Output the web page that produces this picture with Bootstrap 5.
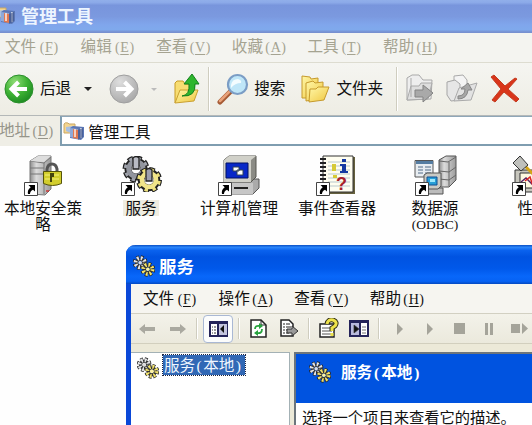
<!DOCTYPE html>
<html lang="zh-CN">
<head>
<meta charset="utf-8">
<meta name="viewport" content="width=device-width, initial-scale=1">
<title>管理工具</title>
<link href="https://cdn.jsdelivr.net/npm/bootstrap@5.3.0/dist/css/bootstrap.min.css" rel="stylesheet">
<style>
body{font:15.6px/18px "Noto Sans CJK SC",sans-serif;color:#111;background:#fefefe;height:425px}
svg{display:block;flex:none}
.desk{width:532px;height:425px}
.ttl{height:33px;padding:0 0 4px;background:linear-gradient(#91afea 0,#8ba9e8 8%,#7895dc 16%,#7b99df 50%,#80a6ec 75%,#7fa9ec 90%,#7790d0 97%);color:#edf5ff;font-weight:700;font-size:18px}
.ttl .cap{margin-left:5px}
.menus{height:29px;background:#f4f4f0;color:#a5a391;padding:0 0 2px 5px}
.menus>span{width:75.6px;flex:none;white-space:nowrap}
.ak{display:inline-block;font-family:"Liberation Serif",serif;font-size:14px;width:24px;margin-left:1px;text-align:center;letter-spacing:.6px}
.ak u{text-underline-offset:2px;letter-spacing:0;margin-right:.6px}
.tools{height:54px;background:linear-gradient(#f5f5f1,#eeede4);border-top:1px solid #dddcd0;border-bottom:1px solid #b4b8b8}
.rule{width:1px;flex:none;background:#cfcdbf;box-shadow:1px 0 #fff}
.caret{width:0;height:0;border:4px solid transparent;border-top-color:#222;border-bottom:0}
.caret.dim{border-width:3px 3px 0;border-top-color:#bbb}
.addr{height:30px;background:#efeee6;color:#96958a}
.addr .lbl{margin-left:-1px;padding-bottom:2px}
.addr .field{margin-left:5px;background:#fff;border:2px solid #7f9db0;border-top:1px solid #8fa7b8;border-right:0;color:#111;padding-left:1px}
.grid{margin-left:-6px;padding-top:9px}
.item{width:98px;flex:none;line-height:15.500px}
.item .lb{margin-top:4px;padding:0 2px;width:84px;text-align:center}
.item .lb.sel{width:auto;background:#efede1}
.odbc{font-family:"Liberation Serif",serif;font-size:13.500px;position:relative;top:-1px}
.win{position:absolute;left:126px;top:245px;width:440px;height:200px;border-left:5px solid #0a48d8;border-radius:9px 0 0 0;background:#ece9d8}
.wttl{height:39px;margin-left:-5px;padding:3px 0 0 7px;border-radius:9px 0 0 0;background:linear-gradient(#0a4fc4 0,#2b86fb 6%,#0a62ee 14%,#0053e1 30%,#0058ea 60%,#0867fa 80%,#0662f4 93%,#0448c0);color:#fff;font-weight:700;font-size:17.5px}
.wmenu{height:29px;color:#111;padding:0 0 0 12px;background:#f6f5f0}
.wtools{height:31px;background:linear-gradient(#f3f2ea,#ebe9dc);border-top:1px solid #d2d0c2;border-bottom:1px solid #d2cfbe}
.cell{flex:none;display:flex;justify-content:center}
.act{width:30px;height:28px;border:1px solid #a9b8d4;border-radius:4px;background:#fbfcfc;align-items:center}
.panes{padding-top:8px;height:101px}
.tree{width:159px;flex:none;background:#fff;border:1px solid #a3b1b5;border-left:0;padding:0 0 0 6px}
.pick{background:#3168b5;color:#eef6ff;outline:1px dotted #1c2440;height:20px;width:82px;padding-left:1px;line-height:18px;white-space:nowrap;margin:2px 0 0 4px}
.pick i,.banner i{font-style:normal;font-family:"Liberation Serif",serif;display:inline-block;text-align:center}
.pick i{width:8px}
.detail{margin-left:4px;width:300px;background:#fff;border:2px solid #6c757c}
.banner{height:49px;background:#0053e0;color:#fff;font-weight:700;font-size:15.6px;padding:0 0 14px 13px}
.banner i{width:9px}
.hint{padding:4px 0 0 6px;font-size:15.300px;letter-spacing:-.02px}
</style>
<script src="https://cdn.jsdelivr.net/npm/bootstrap@5.3.0/dist/js/bootstrap.bundle.min.js"></script>
</head>
<body>
<svg width="0" height="0" class="position-absolute">
<defs>
<symbol id="gears" viewBox="0 0 40 36">
<g fill="none"><circle cx="14" cy="13" r="10.5" stroke="#222" stroke-width="6" stroke-dasharray="5 3.25"/><circle cx="14" cy="13" r="8" stroke="#222" stroke-width="7"/><circle cx="14" cy="13" r="10.2" stroke="#a0a3ac" stroke-width="4" stroke-dasharray="3.2 4.81" stroke-dashoffset="-.9"/><circle cx="14" cy="13" r="7.3" stroke="#92959e" stroke-width="5"/></g>
<path d="M11 2q3-3 6 0v11h-6z" fill="#b9bbc4" stroke="#222" stroke-width="1.3"/>
<g fill="none"><circle cx="27" cy="24" r="10" stroke="#222" stroke-width="6" stroke-dasharray="5 2.85"/><circle cx="27" cy="24" r="8" stroke="#222" stroke-width="6.5"/><circle cx="27" cy="24" r="9.8" stroke="#eee17c" stroke-width="4" stroke-dasharray="3.3 4.4" stroke-dashoffset="-.9"/><circle cx="27" cy="24" r="7.1" stroke="#f1e58a" stroke-width="4.5"/></g>
<path d="M24 14q3-3 6 0v11h-6z" fill="#9d9fae" stroke="#222" stroke-width="1.3"/>
</symbol>
<symbol id="minigears" viewBox="0 0 20 20">
<g fill="none"><circle cx="6.5" cy="7" r="4.6" stroke="#222" stroke-width="4.2" stroke-dasharray="2.2 1.41"/><circle cx="6.5" cy="7" r="3.2" stroke="#333" stroke-width="3"/><circle cx="6.5" cy="7" r="4.2" stroke="#e4e5e8" stroke-width="3.6" stroke-dasharray="1.6 1.7"/>
<circle cx="13.5" cy="13" r="4.6" stroke="#222" stroke-width="4.2" stroke-dasharray="2.2 1.41"/><circle cx="13.5" cy="13" r="3.2" stroke="#333" stroke-width="3"/><circle cx="13.5" cy="13" r="4.2" stroke="#f4e46a" stroke-width="3.6" stroke-dasharray="1.6 1.7"/></g>
<circle cx="6.5" cy="7" r="1.6" fill="#ddd"/><circle cx="13.5" cy="13" r="1.6" fill="#fff5a0"/>
</symbol>
<symbol id="cut" viewBox="0 0 14 14"><path d="M.5.5h13v13H.5z" fill="#fff" stroke="#444"/><path d="M4.5 3H11v6.5L9 7.7Q6 9 6 12H4q-1-4 2.7-6.800z" fill="#000"/></symbol>
<symbol id="admin" viewBox="0 0 22 20">
<path d="M1 3q1-2 4-1l1 1h6v9H1z" fill="#f3d590" stroke="#c9a765"/><path d="M3 6l7-1v8l-7-3z" fill="#a9c0e0"/><path d="M7 7l3-2 11 1v10l-3 3-11-2z" fill="#5b76b4"/><path d="M7 7l8 1v10l-8-2z" fill="#8ea9d8"/><path d="M10 8l5 1v9l-5-1z" fill="#e07850"/><path d="M12 8v8M18 7v10" stroke="#fff" stroke-width="1.300"/><path d="M15 9l5-2v9l-5 3z" fill="#405487" opacity=".6"/>
</symbol>
<radialGradient id="gr" cx=".35" cy=".25" r=".8"><stop offset="0" stop-color="#8fdc76"/><stop offset=".55" stop-color="#3eb234"/><stop offset="1" stop-color="#1c8a22"/></radialGradient>
<radialGradient id="gy" cx=".35" cy=".25" r=".8"><stop offset="0" stop-color="#dedede"/><stop offset="1" stop-color="#a8a8a8"/></radialGradient>
<linearGradient id="fd" x2="1" y2="1"><stop offset="0" stop-color="#fff7a8"/><stop offset="1" stop-color="#efc63f"/></linearGradient>
<linearGradient id="bx"><stop offset="0" stop-color="#8d8d8d"/><stop offset=".3" stop-color="#dcdcdc"/><stop offset="1" stop-color="#9b9b9b"/></linearGradient>
</defs>
</svg>
<div class="desk position-relative overflow-hidden">
<header class="ttl d-flex align-items-center">
<svg width="22" height="20" style="margin-left:-6px"><use href="#admin"/></svg><span class="cap">管理工具</span>
</header>
<nav class="menus d-flex align-items-center">
<span>文件<span class="ak">(<u>F</u>)</span></span><span>编辑<span class="ak">(<u>E</u>)</span></span><span>查看<span class="ak">(<u>V</u>)</span></span><span>收藏<span class="ak">(<u>A</u>)</span></span><span>工具<span class="ak">(<u>T</u>)</span></span><span>帮助<span class="ak">(<u>H</u>)</span></span>
</nav>
<div class="tools d-flex align-items-center ps-1">
<svg width="30" height="30"><circle cx="15" cy="15" r="14" fill="url(#gr)" stroke="#2b8f2c"/><path d="M23 15H8M14.500 8L7.500 15l7 7" fill="none" stroke="#fff" stroke-width="4"/></svg>
<span class="text-nowrap pb-1" style="margin:0 13px 0 6px">后退</span>
<i class="caret" style="margin-right:17px"></i>
<svg width="30" height="30"><circle cx="15" cy="15" r="14" fill="url(#gy)" stroke="#9f9f9f"/><path d="M7 15h15M15.500 8l7 7-7 7" fill="none" stroke="#fff" stroke-width="4"/></svg>
<i class="caret dim" style="margin:0 17px 0 12px"></i>
<svg width="26" height="32" viewBox="0 0 26 32"><path d="M1 30V10l2-2h6l2 3h8v6" fill="#f7dd72" stroke="#c79b24"/><path d="M1 30l5-13h18l-4 11z" fill="url(#fd)" stroke="#caa030"/><path d="M8 23q8-1 7-12h-5l8-10 7 10h-4q1 13-13 12z" fill="#2fb62d" stroke="#14801d"/></svg>
<i class="rule align-self-stretch my-1 ms-2"></i>
<svg class="ms-2" width="32" height="32" viewBox="0 0 32 32"><path d="M13 19L3 29" stroke="#a65b35" stroke-width="5" stroke-linecap="round"/><path d="M12 19L3 28" stroke="#e8a27a" stroke-width="2.500" stroke-linecap="round"/><circle cx="20.500" cy="11.500" r="9.500" fill="#bfe6f8" stroke="#7b9dc5" stroke-width="2.200"/><path d="M14 12q1-6 7-6 4 1 3 4-6 0-10 5z" fill="#f3fcff"/></svg>
<span class="text-nowrap pb-1" style="margin-left:5px">搜索</span>
<svg class="ms-3" width="29" height="30" viewBox="0 0 29 30"><path d="M1 24V2l8 1 1 2 7-1v20z" fill="url(#fd)" stroke="#c69a2c"/><path d="M5 27V9l7-2 2 2 8-1v16z" fill="url(#fd)" stroke="#c69a2c"/><path d="M8 28l1-13h6l2-2h11l-5 13z" fill="url(#fd)" stroke="#c69a2c"/></svg>
<span class="text-nowrap pb-1" style="margin-left:6px">文件夹</span>
<i class="rule align-self-stretch my-1" style="margin-left:13px"></i>
<svg class="ms-2" width="30" height="30" viewBox="0 0 30 30"><path d="M2 26V4l5-3h7l4 5h9l-1 19z" fill="#eee" stroke="#a9a9a9"/><path d="M6 4v19M2 26l4-14h8l2-3h11l-4 16z" fill="#dedede" stroke="#aaa"/><path d="M10 16h8v-5l10 8-10 9v-5h-8z" fill="#a9a9a9" stroke="#838383"/></svg>
<svg style="margin-left:11px" width="32" height="30" viewBox="0 0 32 30"><path d="M8 24V2l9-1 4 5v18z" fill="#f4f4f4" stroke="#aaa"/><path d="M1 21V8l8-2 5 4v16l-9 1z" fill="#e6e6e6" stroke="#a5a5a5"/><path d="M8 27l5-13 18-5-6 17z" fill="#e2e2e2" stroke="#aaa"/><path d="M12 22q7 0 7-7h-4l7-6 4 7h-4q-1 9-10 9z" fill="#a7a7a7" stroke="#858585"/></svg>
<svg style="margin-left:11px" width="32" height="32" viewBox="0 0 32 32"><path d="M2 4l3-2 11 11L26 5l2 1-9 10 11 10-3 3-12-10-9 10-3-2 9-11z" fill="#d9351a" stroke="#c33c20"/></svg>
</div>
<div class="addr d-flex align-items-center">
<span class="lbl text-nowrap">地址<span class="ak">(<u>D</u>)</span></span>
<div class="field d-flex align-items-center align-self-stretch flex-grow-1"><svg width="22" height="20"><use href="#admin"/></svg><span style="margin-left:3px">管理工具</span></div>
</div>
<main class="grid d-flex">
<div class="item d-flex flex-column align-items-center">
<svg width="40" height="41" viewBox="0 0 40 41"><path d="M7 39V6l8-5h13v33l-6 6z" fill="url(#bx)" stroke="#777"/><path d="M7 6l14 2 7-6M21 8v31M7 13h14M7 19h14" fill="none" stroke="#777"/><path d="M7 6l8-5h13l-7 6z" fill="#ddd"/><path d="M24 17v-3q1-5 5-5t5 5v3" fill="none" stroke="#555" stroke-width="3"/><path d="M20.500 16.500h18v12q-9 4-18 0z" fill="#d2cd2c" stroke="#55530a"/><path d="M22 20h14M22 24h14" stroke="#f4f17a"/><path d="M27 18h4v4h-2v5h-2z" fill="#45440d"/><path d="M23 36h3" stroke="#d00"/><use href="#cut" x="1" y="27" width="14" height="14"/></svg>
<div class="lb">本地安全策略</div></div>
<div class="item d-flex flex-column align-items-center">
<svg width="42" height="41" viewBox="0 0 42 41"><use href="#gears" x="2" y="1" width="40" height="36"/><use href="#cut" x="1" y="27" width="14" height="14"/></svg>
<div class="lb sel">服务</div></div>
<div class="item d-flex flex-column align-items-center">
<svg width="42" height="41" viewBox="0 0 42 41"><path d="M7 28l5-4h29v9l-6 6H7z" fill="#aaa" stroke="#555"/><path d="M7 28h28v11H7z" fill="#c6c6c6"/><path d="M16 33h14" stroke="#222" stroke-width="2"/><path d="M6 5l5-4h27v21l-5 5H6z" fill="#8b8b85" stroke="#55554f"/><path d="M6 5h27v22H6zM6 5l5-4h27l-5 4z" fill="#d0d0c8"/><path d="M8 8h22v15H8z" fill="#0828c8" stroke="#001064"/><path d="M15 12h6v4h-6zM19 15h6v5h-6z" fill="#fff" stroke="#345"/><use href="#cut" y="27" width="14" height="14"/></svg>
<div class="lb text-nowrap">计算机管理</div></div>
<div class="item d-flex flex-column align-items-center">
<svg width="42" height="41" viewBox="0 0 42 41"><path d="M8 2h31v37H8z" fill="#66613e"/><path d="M7 1h30v36H7z" fill="#fffef0" stroke="#333"/><path d="M12 7h22M12 11h22M12 15h22M12 19h22M12 23h22M12 27h22M12 31h22" stroke="#b8c8cc"/><path d="M4 4h6M4 8h6M4 12h6M4 16h6M4 20h6M4 24h6" stroke="#222" stroke-width="2"/><path d="M16 9h4v7h-4zM17 20h4v3h-4z" fill="#d6ca35"/><path d="M26 4h4v3h-4zM24 9h6v7h2v2h-8v-2h2v-5h-2z" fill="#1439a2"/><text x="20" y="35" font-family="Liberation Sans,sans-serif" font-weight="700" font-size="18" fill="#a8202a">?</text><use href="#cut" y="27" width="14" height="14"/></svg>
<div class="lb text-nowrap">事件查看器</div></div>
<div class="item d-flex flex-column align-items-center">
<svg width="43" height="41" viewBox="0 0 43 41"><path d="M25 5l7-4h10v24l-7 7H25z" fill="url(#bx)" stroke="#555"/><path d="M25 6l9 1 8-5M25 16l10 1 7-5M25 24l10 1 7-5M35 7v24" fill="none" stroke="#666"/><path d="M1 5.500h18V22H1z" fill="#e8edf1" stroke="#555"/><path d="M2 6h17v3H2z" fill="#557da2"/><path d="M4 12h5M11 12h6M4 15h5M11 15h6M4 18h5M11 18h6" stroke="#536d88"/><path d="M14 33h15v6H14z" fill="#bbb" stroke="#555"/><path d="M10 20l3-2h14v13l-3 3H10z" fill="#c9cac5" stroke="#555"/><path d="M13 22h10v8H13z" fill="#279fd7" stroke="#124e92"/><path d="M16 24h5v3h-5z" fill="#9ee8fb"/><use href="#cut" x="1" y="27" width="14" height="14"/></svg>
<div class="lb">数据源<br><span class="odbc">(ODBC)</span></div></div>
<div class="item d-flex flex-column align-items-center">
<svg width="42" height="41" viewBox="0 0 42 41"><path d="M3 15h38v22H3z" fill="#c7c6bd" stroke="#333"/><path d="M8 18h32v15H8z" fill="#fdf8df" stroke="#333"/><path d="M9 27l5-4 7 7" fill="none" stroke="#526" stroke-width="1.500"/><path d="M13 26l5-4 3 9" fill="none" stroke="#d22" stroke-width="1.500"/><path d="M13 11l9 9" stroke="#d6a514" stroke-width="3"/><path d="M1 8L8 1l8 9-7 6z" fill="#bfc0bc" stroke="#333"/><use href="#cut" y="27" width="14" height="14"/></svg>
<div class="lb">性能</div></div>
</main>

<section class="win">
<div class="wttl d-flex align-items-center"><svg width="22" height="22"><use href="#minigears"/></svg><span class="ms-1">服务</span></div>
<nav class="menus wmenu d-flex align-items-center"><span>文件<span class="ak">(<u>F</u>)</span></span><span>操作<span class="ak">(<u>A</u>)</span></span><span>查看<span class="ak">(<u>V</u>)</span></span><span>帮助<span class="ak">(<u>H</u>)</span></span></nav>
<div class="wtools d-flex align-items-center">
<div class="cell" style="width:32px"><svg width="16" height="12"><path d="M0 6l6-5v3h10v4H6v3z" fill="#aaa9a0"/></svg></div>
<div class="cell" style="width:29px"><svg width="16" height="12"><path d="M16 6l-6-5v3H0v4h10v3z" fill="#aaa9a0"/></svg></div>
<i class="rule align-self-stretch my-1 ms-1"></i>
<div class="cell act" style="margin-left:6px"><svg width="19" height="16"><path d="M1 1h17v14H1z" fill="#fff" stroke="#25245a" stroke-width="2"/><path d="M9 2h9v12H9z" fill="#c4c5de"/><path d="M1 2h17M9 1v14" stroke="#25245a" stroke-width="2"/><path d="M3 6h4M3 9h4M3 12h4" stroke="#333" stroke-dasharray="1 1 3"/><path d="M15 4v8l-4-4z" fill="#111"/></svg></div>
<i class="rule align-self-stretch my-1" style="margin-left:5px"></i>
<svg style="margin-left:11px" width="17" height="19"><path d="M1 1h10l5 5v12H1z" fill="#fff" stroke="#222" stroke-width="1.500"/><path d="M11 1v5h5" fill="none" stroke="#222"/><path d="M5 10q0-4 5-3M12 10q0 5-5 4" fill="none" stroke="#27a23d" stroke-width="1.800"/><path d="M9 4l4 3-4 3zM8 11v6l-4-3z" fill="#27a23d"/></svg>
<svg style="margin-left:13px" width="19" height="19"><path d="M1 1h8l4 4v12H1z" fill="#fff" stroke="#222" stroke-width="1.500"/><path d="M3 5h2M6 5h4M3 8h2M6 8h5M3 11h2M6 11h3M3 14h2M6 14h3" stroke="#222"/><path d="M7 10h5V7l6 5-6 5v-3H7z" fill="#999" stroke="#333"/></svg>
<i class="rule align-self-stretch my-1" style="margin-left:9px"></i>
<svg style="margin-left:10px" width="20" height="21"><path d="M1 6h14v13H1z" fill="#fff" stroke="#222" stroke-width="1.500"/><path d="M3 10h8M3 13h10M3 16h10" stroke="#555"/><path d="M8 6q1-5 6-4 5 2 2 6l-3 2v3" fill="none" stroke="#302f16" stroke-width="5"/><path d="M8 6q1-5 6-4 5 2 2 6l-3 2v3M13 15v3" fill="none" stroke="#eee34b" stroke-width="3"/></svg>
<svg style="margin-left:10px" width="20" height="17"><path d="M1 1h18v15H1z" fill="#fff" stroke="#25245a" stroke-width="2"/><path d="M2 2h9v13H2z" fill="#b9badc"/><path d="M1 2h18M11 1v15" stroke="#25245a" stroke-width="2"/><path d="M5 5v8l5-4zM13 7h4M13 10h4M13 13h4" fill="#111" stroke="#333" stroke-width=".7"/></svg>
<i class="rule align-self-stretch my-1" style="margin-left:9px"></i>
<div class="cell" style="width:41px"><svg width="8" height="12"><path d="M1 0l6 6-6 6z" fill="#a5a49a"/></svg></div>
<div class="cell" style="width:20px"><svg width="8" height="12"><path d="M1 0l6 6-6 6z" fill="#a5a49a"/></svg></div>
<div class="cell" style="width:39px"><svg width="11" height="11"><path d="M0 0h11v11H0z" fill="#a5a49a"/></svg></div>
<div class="cell" style="width:20px"><svg width="8" height="12"><path d="M0 0h3v12H0zM5 0h3v12H5z" fill="#a5a49a"/></svg></div>
<div class="cell" style="width:41px"><svg width="17" height="11"><path d="M0 1h9v9H0zM11 0l6 5.500-6 5.500z" fill="#a5a49a"/></svg></div>
</div>
<div class="panes d-flex">
<div class="tree d-flex align-items-start"><svg width="22" height="22" class="mt-1"><use href="#minigears"/></svg><div class="pick">服务<i>(</i>本地<i>)</i></div></div>
<div class="detail"><div class="banner d-flex align-items-center"><svg width="22" height="22"><use href="#minigears"/></svg><span class="text-nowrap" style="margin-left:10px">服务<i>(</i>本地<i>)</i></span></div>
<div class="hint text-nowrap">选择一个项目来查看它的描述。</div></div>
</div>
</section>
</div>
</body>
</html>
